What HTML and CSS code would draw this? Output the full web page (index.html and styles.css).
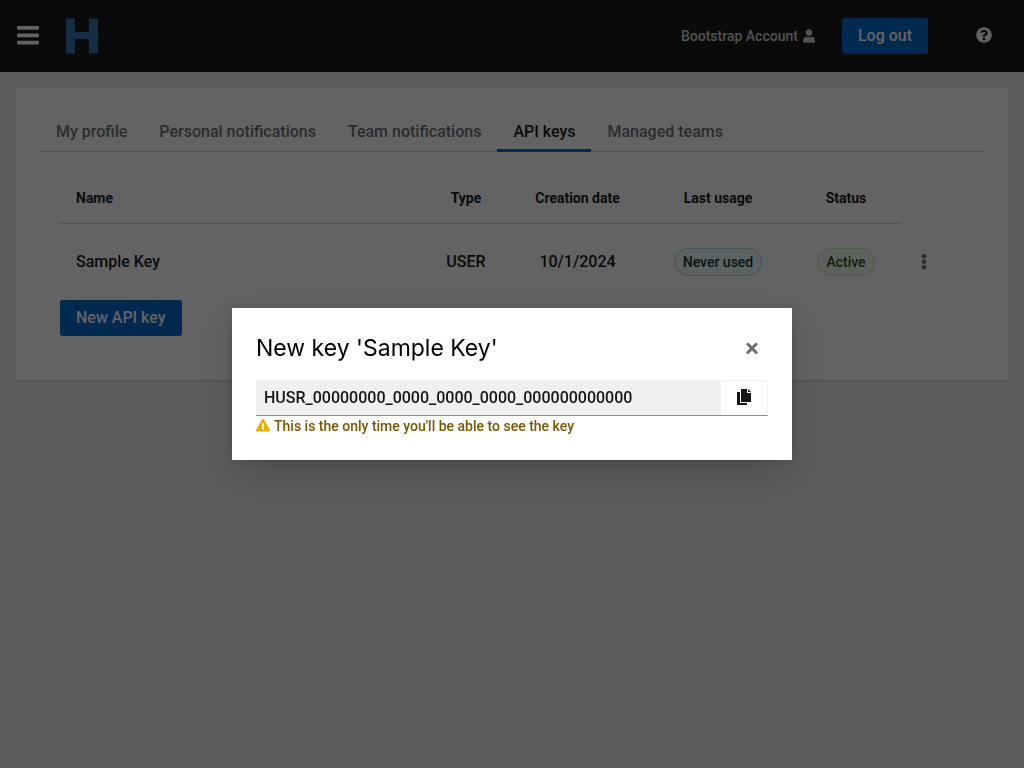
FILE: index.html
```html
<!DOCTYPE html>
<html lang="en">
<head>
<meta charset="utf-8">
<meta name="viewport" content="width=device-width, initial-scale=1">
<title>API keys</title>
<link rel="stylesheet" href="styles.css">
</head>
<body>
<header class="masthead">
  <button class="plain menu-toggle" type="button" aria-label="Global navigation">
    <svg width="22" height="20" viewBox="0 0 22 20" fill="currentColor"><rect y="0" width="22" height="3.8" rx=".7"/><rect y="7.4" width="22" height="3.800" rx=".7"/><rect y="14.8" width="22" height="3.800" rx=".7"/></svg>
  </button>
  <a class="brand" href="#" aria-label="Home">
    <svg width="32" height="36" viewBox="0 0 32 36" fill="currentColor"><path d="M0 .4h9v13.600h14V.4h9v35.200h-9V21H9v14.600H0z"/></svg>
  </a>
  <div class="tools">
    <button class="plain account" type="button">Bootstrap Account
      <svg width="12" height="14" viewBox="0 0 448 512" fill="currentColor"><path d="M224 256c70.700 0 128-57.300 128-128S294.700 0 224 0 96 57.300 96 128s57.300 128 128 128zm89.600 32h-16.700c-22.200 10.200-46.900 16-72.900 16s-50.600-5.800-72.900-16h-16.700C60.200 288 0 348.200 0 422.400V464c0 26.500 21.500 48 48 48h352c26.500 0 48-21.500 48-48v-41.600c0-74.200-60.200-134.400-134.400-134.400z"/></svg>
    </button>
    <button class="primary" type="button">Log out</button>
    <button class="plain help" type="button" aria-label="Help">
      <svg width="16" height="18" viewBox="0 0 512 576" fill="currentColor"><path d="M504 256c0 136.997-111.043 248-248 248S8 392.997 8 256C8 119.083 119.043 8 256 8s248 111.083 248 248zM262.655 90c-54.497 0-89.255 22.957-116.549 63.758-3.536 5.286-2.353 12.415 2.715 16.258l34.699 26.310c5.205 3.947 12.621 3.008 16.665-2.122 17.864-22.658 30.113-35.797 57.303-35.797 20.429 0 45.698 13.148 45.698 32.958 0 14.976-12.363 22.667-32.534 33.976C247.128 238.528 216 254.941 216 296v4c0 6.627 5.373 12 12 12h56c6.627 0 12-5.373 12-12v-1.333c0-28.462 83.186-29.647 83.186-106.667 0-58.002-60.165-102-116.531-102zM256 338c-25.365 0-46 20.635-46 46 0 25.364 20.635 46 46 46s46-20.636 46-46c0-25.365-20.635-46-46-46z"/></svg>
    </button>
  </div>
</header>

<main class="main">
  <section class="card">
    <nav class="tabs" aria-label="Account settings">
      <a class="tab" href="#">My profile</a>
      <a class="tab" href="#">Personal notifications</a>
      <a class="tab" href="#">Team notifications</a>
      <a class="tab current" href="#" aria-current="page">API keys</a>
      <a class="tab" href="#">Managed teams</a>
    </nav>
    <div class="panel">
      <table class="keys">
        <colgroup><col><col class="col-type"><col class="col-date"><col class="col-usage"><col class="col-status"><col class="col-action"></colgroup>
        <thead><tr><th scope="col">Name</th><th scope="col">Type</th><th scope="col">Creation date</th><th scope="col">Last usage</th><th scope="col">Status</th><td></td></tr></thead>
        <tbody><tr>
          <td>Sample Key</td><td>USER</td><td>10/1/2024</td>
          <td><span class="label cyan">Never used</span></td>
          <td><span class="label green">Active</span></td>
          <td><button class="plain kebab" type="button" aria-label="Actions"><svg width="6" height="16" viewBox="0 0 192 512" fill="currentColor"><circle cx="96" cy="72" r="72"/><circle cx="96" cy="248" r="72"/><circle cx="96" cy="424" r="72"/></svg></button></td>
        </tr></tbody>
      </table>
      <button class="primary" type="button">New API key</button>
    </div>
  </section>
</main>

<div class="backdrop">
  <div class="modal" role="dialog" aria-modal="true" aria-labelledby="modal-title">
    <div class="modal-header">
      <h1 class="modal-title" id="modal-title">New key 'Sample Key'</h1>
      <button class="plain close" type="button" aria-label="Close"><svg width="12" height="12" viewBox="0 0 12 12" fill="none" stroke="currentColor" stroke-width="3" stroke-linecap="round"><path d="M1.900 2.300l8.200 8.200M10.100 2.300l-8.200 8.200"/></svg></button>
    </div>
    <div class="copy">
      <input class="copy-input" type="text" readonly aria-label="API key" aria-describedby="key-help" value="HUSR_00000000_0000_0000_0000_000000000000">
      <button class="plain copy-button" type="button" aria-label="Copy to clipboard"><svg width="14" height="16" viewBox="0 0 14 16" fill="currentColor"><path d="M0 3h3v11h7v2H0zM4 0h6v4h4v9H4zM11 0l3 3h-3z"/></svg></button>
    </div>
    <p class="helper" id="key-help"><svg width="14" height="14" viewBox="0 0 576 576" fill="#f0ab00"><path d="M569.517 440.013C587.975 472.007 564.806 512 527.940 512H48.054c-36.937 0-59.999-40.055-41.577-71.987L246.423 23.985c18.467-32.009 64.720-31.951 83.154 0l239.940 416.028zM288 354c-25.405 0-46 20.595-46 46s20.595 46 46 46 46-20.595 46-46-20.595-46-46-46zm-43.673-165.346l7.418 136c.347 6.364 5.609 11.346 11.982 11.346h48.546c6.373 0 11.635-4.982 11.982-11.346l7.418-136c.375-6.874-5.098-12.654-11.982-12.654h-63.383c-6.884 0-12.356 5.780-11.981 12.654z"/></svg>This is the only time you'll be able to see the key</p>
  </div>
</div>
</body>
</html>
```
FILE: styles.css
```css
*, *::before, *::after { box-sizing: border-box; }
body {
  margin: 0;
  min-height: 100vh;
  background: #f0f0f0;
  color: #151515;
  font: 500 16px/24px Roboto, "Liberation Sans", sans-serif;
}
button, input { font: inherit; }
svg { display: block; flex: none; }
.plain {
  display: flex;
  align-items: center;
  border: 0;
  padding: 0;
  background: none;
  color: #6a6e73;
}
.primary {
  height: 36px;
  padding: 0 16px;
  border: 0;
  border-radius: 3px;
  background: #0066cc;
  color: #fff;
}
.masthead {
  display: flex;
  align-items: center;
  height: 72px;
  padding: 0 32px 0 17px;
  background: #151515;
}
.menu-toggle { color: #fff; }
.brand { margin-left: 27px; color: #3374b1; }
.tools {
  display: flex;
  align-items: center;
  margin-left: auto;
}
.account {
  gap: 5px;
  margin-right: 27px;
  color: #d2d2d2;
  font-size: 14px;
}
.help { margin-left: 48px; color: #fff; }
.main { padding: 16px; }
.card {
  padding: 24px 24px 44px;
  background: #fff;
  box-shadow: 0 1px 2px rgba(3, 3, 3, .12), 0 0 2px rgba(3, 3, 3, .06);
}
.tabs {
  display: flex;
  height: 40px;
  box-shadow: inset 0 -1px #d2d2d2;
}
.tab {
  padding: 8px 16px;
  color: #6a6e73;
  text-decoration: none;
  white-space: nowrap;
}
.current {
  color: #151515;
  box-shadow: inset 0 -3px #0066cc;
}
.panel { padding: 20px 20px 0; }
.keys {
  width: 100%;
  table-layout: fixed;
  border-collapse: separate;
  border-spacing: 0;
  text-align: center;
}
.col-type { width: 90px; }
.col-date { width: 133px; }
.col-usage { width: 148px; }
.col-status { width: 108px; }
.col-action { width: 64px; }
.keys th, .keys td { padding: 0; }
.keys th {
  height: 52px;
  border-bottom: 1px solid #d2d2d2;
  font-size: 14px;
  font-weight: 700;
}
.keys tbody td { height: 76px; }
.keys tr > :first-child { padding-left: 16px; text-align: left; }
.label {
  display: inline-block;
  padding: 1px 8px;
  border: 1px solid;
  border-radius: 30px;
  font-size: 14px;
}
.cyan { background: #f2f9f9; border-color: #a2d9d9; color: #003737; }
.green { background: #f3faf2; border-color: #bde5b8; color: #1e4f18; }
.kebab { padding: 8px 21px; }
.backdrop {
  position: fixed;
  inset: 0;
  display: flex;
  align-items: center;
  justify-content: center;
  background: rgba(3, 3, 3, .62);
}
.modal {
  width: 560px;
  max-width: 100%;
  padding: 24px;
  background: #fff;
  box-shadow: 0 16px 32px rgba(3, 3, 3, .16), 0 0 8px rgba(3, 3, 3, .1);
}
.modal-header {
  display: flex;
  align-items: center;
  justify-content: space-between;
  height: 32px;
  margin-bottom: 16px;
}
.modal-title {
  margin: 0;
  color: #000;
  font: 400 23px/32px Inter, sans-serif;
}
.close { margin-right: 10px; }
.copy { display: flex; height: 36px; }
.copy-input {
  flex: 1;
  min-width: 0;
  padding: 0 8px;
  border: 0;
  border-bottom: 1px solid #8a8d90;
  border-radius: 0;
  background: #f0f0f0;
  color: #151515;
}
.copy-button {
  justify-content: center;
  width: 47px;
  padding-bottom: 2px;
  border: 1px solid #f0f0f0;
  border-left: 0;
  border-bottom-color: #8a8d90;
  color: #151515;
}
.helper {
  display: flex;
  align-items: center;
  gap: 4px;
  margin: 0;
  color: #795600;
  font-size: 14px;
  line-height: 20px;
}
```
